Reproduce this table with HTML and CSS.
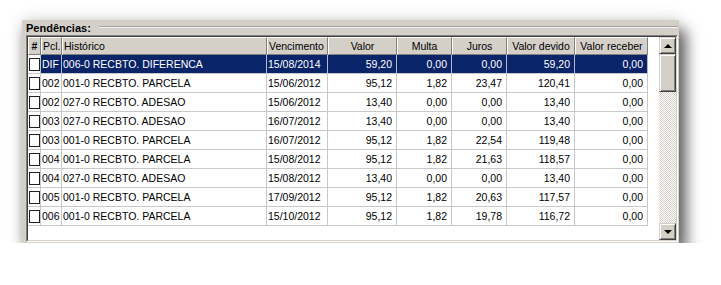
FILE: index.html
```html
<!DOCTYPE html>
<html lang="pt-BR">
<head>
<meta charset="utf-8">
<title>Pendências</title>
<link rel="stylesheet" href="styles.css">
</head>
<body>
<div class="panel">
  <div class="legend"><span class="legend-text">Pendências:</span><span class="legend-line"></span></div>
  <div class="grid">
    <div class="grid-inner">
      <div class="table">
        <div class="row head">
          <div class="hc c hash">#</div>
          <div class="hc">Pcl.</div>
          <div class="hc">Histórico</div>
          <div class="hc">Vencimento</div>
          <div class="hc c">Valor</div>
          <div class="hc c">Multa</div>
          <div class="hc c">Juros</div>
          <div class="hc c">Valor devido</div>
          <div class="hc c">Valor receber</div>
        </div>
        <div class="row sel">
          <div class="cell chk"><span class="box"></span></div>
          <div class="cell">DIF</div><div class="cell">006-0 RECBTO. DIFERENCA</div><div class="cell">15/08/2014</div>
          <div class="cell r">59,20</div><div class="cell r">0,00</div><div class="cell r">0,00</div><div class="cell r">59,20</div><div class="cell r">0,00</div>
        </div>
        <div class="row">
          <div class="cell chk"><span class="box"></span></div>
          <div class="cell">002</div><div class="cell">001-0 RECBTO. PARCELA</div><div class="cell">15/06/2012</div>
          <div class="cell r">95,12</div><div class="cell r">1,82</div><div class="cell r">23,47</div><div class="cell r">120,41</div><div class="cell r">0,00</div>
        </div>
        <div class="row">
          <div class="cell chk"><span class="box"></span></div>
          <div class="cell">002</div><div class="cell">027-0 RECBTO. ADESAO</div><div class="cell">15/06/2012</div>
          <div class="cell r">13,40</div><div class="cell r">0,00</div><div class="cell r">0,00</div><div class="cell r">13,40</div><div class="cell r">0,00</div>
        </div>
        <div class="row">
          <div class="cell chk"><span class="box"></span></div>
          <div class="cell">003</div><div class="cell">027-0 RECBTO. ADESAO</div><div class="cell">16/07/2012</div>
          <div class="cell r">13,40</div><div class="cell r">0,00</div><div class="cell r">0,00</div><div class="cell r">13,40</div><div class="cell r">0,00</div>
        </div>
        <div class="row">
          <div class="cell chk"><span class="box"></span></div>
          <div class="cell">003</div><div class="cell">001-0 RECBTO. PARCELA</div><div class="cell">16/07/2012</div>
          <div class="cell r">95,12</div><div class="cell r">1,82</div><div class="cell r">22,54</div><div class="cell r">119,48</div><div class="cell r">0,00</div>
        </div>
        <div class="row">
          <div class="cell chk"><span class="box"></span></div>
          <div class="cell">004</div><div class="cell">001-0 RECBTO. PARCELA</div><div class="cell">15/08/2012</div>
          <div class="cell r">95,12</div><div class="cell r">1,82</div><div class="cell r">21,63</div><div class="cell r">118,57</div><div class="cell r">0,00</div>
        </div>
        <div class="row">
          <div class="cell chk"><span class="box"></span></div>
          <div class="cell">004</div><div class="cell">027-0 RECBTO. ADESAO</div><div class="cell">15/08/2012</div>
          <div class="cell r">13,40</div><div class="cell r">0,00</div><div class="cell r">0,00</div><div class="cell r">13,40</div><div class="cell r">0,00</div>
        </div>
        <div class="row">
          <div class="cell chk"><span class="box"></span></div>
          <div class="cell">005</div><div class="cell">001-0 RECBTO. PARCELA</div><div class="cell">17/09/2012</div>
          <div class="cell r">95,12</div><div class="cell r">1,82</div><div class="cell r">20,63</div><div class="cell r">117,57</div><div class="cell r">0,00</div>
        </div>
        <div class="row">
          <div class="cell chk"><span class="box"></span></div>
          <div class="cell">006</div><div class="cell">001-0 RECBTO. PARCELA</div><div class="cell">15/10/2012</div>
          <div class="cell r">95,12</div><div class="cell r">1,82</div><div class="cell r">19,78</div><div class="cell r">116,72</div><div class="cell r">0,00</div>
        </div>
      </div>
      <div class="scrollbar">
        <div class="sbtn"><span class="arrow up"></span></div>
        <div class="thumb"></div>
        <div class="track"></div>
        <div class="sbtn"><span class="arrow down"></span></div>
      </div>
    </div>
  </div>
</div>
</body>
</html>
```

FILE: styles.css
```css
* { box-sizing: border-box; }
html, body { margin: 0; padding: 0; background: #ffffff; }
body {
  font-family: "Liberation Sans", Arial, sans-serif;
  font-size: 10.5px;
  color: #000;
  padding: 20px 0 0 22px;
}
.panel {
  width: 657px;
  height: 223px;
  background: #d4d0c8;
  padding: 0 1px 1px 4px;
  display: flex;
  flex-direction: column;
  box-shadow: 6px 11px 14px 1px rgba(0, 0, 0, 0.62), 0 -2px 14px rgba(0, 0, 0, 0.12);
}
.legend {
  height: 15px;
  display: flex;
  align-items: center;
}
.legend-text {
  font-weight: bold;
  font-size: 11px;
  line-height: 15px;
  padding-top: 1px;
}
.legend-line {
  flex: 1;
  height: 2px;
  margin: -2px 0 0 8px;
  border-top: 1px solid #a0a0a0;
  border-bottom: 1px solid #f4f4f4;
}
.grid {
  height: 207px;
  border: 1px solid;
  border-color: #808080 #ffffff #ffffff #808080;
}
.grid-inner {
  height: 100%;
  border: 1px solid;
  border-color: #404040 #d4d0c8 #d4d0c8 #404040;
  background: #ffffff;
  display: flex;
}
.table { flex: 1; }
.row {
  display: grid;
  grid-template-columns: 13px 21px 205px 61px 69px 55px 55px 68px 73px;
  height: 19px;
}
.row.head { height: 18px; }
.hc {
  background: #d4d0c8;
  border-top: 1px solid #ffffff;
  border-left: 1px solid #ffffff;
  border-right: 1px solid #808080;
  border-bottom: 1px solid #808080;
  padding: 0 1px;
  line-height: 16px;
  white-space: nowrap;
  overflow: hidden;
}
.hc.c { text-align: center; }
.hc.hash { font-weight: bold; }
.cell {
  border-right: 1px solid #c8c8c8;
  border-bottom: 1px solid #c8c8c8;
  line-height: 18px;
  padding: 0 2px 0 1px;
  white-space: nowrap;
  overflow: hidden;
}
.cell.r { text-align: right; padding-right: 4px; }
.cell.chk { padding: 0; display: flex; align-items: center; justify-content: center; }
.box {
  width: 12px;
  height: 13px;
  background: #ffffff;
  border: 1px solid #202020;
  margin-left: 1px;
}
.row.sel .cell:not(.chk) {
  background: #0a246a;
  color: #ffffff;
  border-right-color: #b8b8c8;
}
.scrollbar {
  width: 17px;
  display: flex;
  flex-direction: column;
}
.sbtn, .thumb {
  background: #d4d0c8;
  border: 1px solid;
  border-color: #d4d0c8 #404040 #404040 #d4d0c8;
  box-shadow: inset 1px 1px 0 #ffffff, inset -1px -1px 0 #808080;
}
.sbtn {
  height: 17px;
  display: flex;
  align-items: center;
  justify-content: center;
}
.thumb { height: 38px; }
.track {
  flex: 1;
  background: repeating-conic-gradient(#d4d0c8 0 25%, #ffffff 0 50%) 0 0 / 2px 2px;
}
.arrow {
  width: 0;
  height: 0;
  border-left: 4px solid transparent;
  border-right: 4px solid transparent;
}
.arrow.up { border-bottom: 4px solid #000; }
.arrow.down { border-top: 4px solid #000; margin-top: 1px; }
```
